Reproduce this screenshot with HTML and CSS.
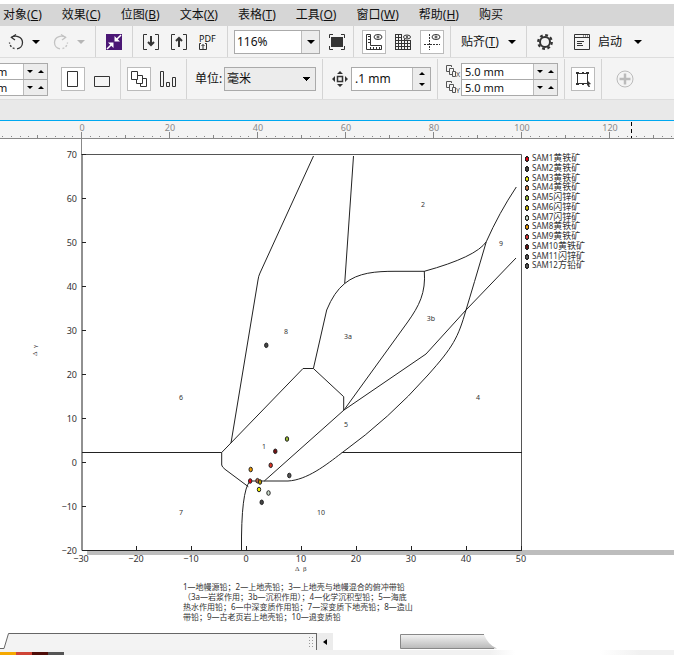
FILE: index.html
```html
<!DOCTYPE html>
<html lang="zh-CN">
<head>
<meta charset="utf-8">
<title>绘图</title>
<link rel="stylesheet" href="styles.css">
</head>
<body>
<svg class="defs" aria-hidden="true">
  <symbol id="down" viewBox="0 0 8 4"><path d="M0 0h8L4 4z"/></symbol>
  <symbol id="up" viewBox="0 0 8 4"><path d="M0 4h8L4 0z"/></symbol>
  <symbol id="copies" viewBox="0 0 10 12"><path d="M3.500 6.500H.5V.5H5.500V2M6.500 9.500H3.500V3.500H7.500V6M6.500 6.500h3v5h-3z" fill="none" stroke="#555"/></symbol>
</svg>
<nav class="menu">
  <a href="#">对象(<u>C</u>)</a><a href="#">效果(<u>C</u>)</a><a href="#">位图(<u>B</u>)</a><a href="#">文本(<u>X</u>)</a><a href="#">表格(<u>T</u>)</a><a href="#">工具(<u>O</u>)</a><a href="#">窗口(<u>W</u>)</a><a href="#">帮助(<u>H</u>)</a><a href="#">购买</a>
</nav>

<div class="bar standard">
  <div class="group history">
    <button class="split" aria-label="撤销"><svg width="16" height="16" viewBox="0 0 16 16" fill="none" stroke="#333" stroke-width="1.300"><path d="M3 3.500C8 .5 14.500 3 14.500 8.500C14.500 12 12 14.500 9 14.800"/><path d="M8 .5L3.500 3.500L7 6"/><path d="M6.500 14.500A6.500 6.500 0 0 1 1.500 8.500" stroke-dasharray="2 1.500"/></svg><svg class="arrow"><use href="#down"/></svg></button>
    <button class="split faded" aria-label="重做"><svg width="16" height="16" viewBox="0 0 16 16" fill="none" stroke="#333" stroke-width="1.300"><path d="M13 3.500C8 .5 1.500 3 1.500 8.500C1.500 12 4 14.500 7 14.800"/><path d="M8 .5L12.500 3.500L9 6"/><path d="M9.500 14.500A6.500 6.500 0 0 0 14.500 8.500" stroke-dasharray="2 1.500"/></svg><svg class="arrow"><use href="#down"/></svg></button>
  </div>
  <div class="group">
    <button aria-label="搜索内容"><svg width="16" height="16" viewBox="0 0 16 16"><path fill="#4b1775" d="M0 0h16v16H0z"/><path d="M15 1l-5 5M1 15l5-5" stroke="#fff" stroke-width="1.500"/><path d="M8.500 2v5.500H14zM2 8.500h5.500V14z" fill="#fff"/></svg></button>
  </div>
  <div class="group files">
    <button aria-label="导入"><svg width="16" height="16" viewBox="0 0 16 16" fill="none" stroke="#333"><path d="M4 .5H.5v15H4M12 .5h3.500v15H12"/><path d="M8 2v9M5 8l3 3 3-3" stroke-width="2"/></svg></button>
    <button aria-label="导出"><svg width="16" height="16" viewBox="0 0 16 16" fill="none" stroke="#333"><path d="M4 .5H.5v15H4M12 .5h3.500v15H12"/><path d="M8 13V4M5 7l3-3 3 3" stroke-width="2"/></svg></button>
    <button class="pdf" aria-label="发布为 PDF"><span>PDF</span><svg width="8" height="7" viewBox="0 0 8 7" fill="none" stroke="#333"><path d="M2 .5H.5v6h7v-6H6M4 6V1.500M2.500 3L4 1.500 5.500 3"/></svg></button>
  </div>
  <div class="group zoomer">
    <div class="combo"><input aria-label="缩放级别" value="116%"><button aria-label="缩放列表"><svg class="arrow"><use href="#down"/></svg></button></div>
    <button aria-label="全屏预览"><svg width="18" height="16" viewBox="0 0 18 16"><path d="M3 3h12v10H3z" fill="#333"/><path d="M1.500 4V.5H5M13 .5h3.500V4M1.500 12v3.500H5M13 15.500h3.500V12" fill="none" stroke="#333"/></svg></button>
  </div>
  <div class="group toggles">
    <button class="on" aria-label="显示标尺"><svg width="18" height="18" viewBox="0 0 18 18" fill="none" stroke="#333"><path d="M1.500 1.500h4v11h11v4h-15zM3 3.500h2M3 6.500h2M3 9.500h2M5.500 14v2M8.500 14v2M11.500 14v2M14.500 14v2"/><ellipse cx="13" cy="4" rx="4" ry="2.500"/><circle cx="13" cy="4" r="1"/></svg></button>
    <button aria-label="显示网格"><svg width="16" height="16" viewBox="0 0 16 16" fill="none" stroke="#333"><path d="M.5 0v16M3.500 0v16M6.500 0v16M9.500 5v11M12.500 6v10M15.500 6v10M0 .5h7M0 3.500h7M0 6.500h16M0 9.500h16M0 12.500h16M0 15.500h16"/><ellipse cx="12" cy="3" rx="3.500" ry="2"/><circle cx="12" cy="3" r=".7"/></svg></button>
    <button class="on" aria-label="显示辅助线"><svg width="18" height="18" viewBox="0 0 18 18" fill="none" stroke="#333"><path d="M6.500 1v16M1 11.500h16" stroke-dasharray="2 1"/><ellipse cx="13" cy="4" rx="4" ry="2.500"/><circle cx="13" cy="4" r="1"/></svg></button>
  </div>
  <div class="group">
    <button class="snap"><span>贴齐(<u>T</u>)</span><svg class="arrow"><use href="#down"/></svg></button>
  </div>
  <div class="group">
    <button aria-label="选项"><svg width="16" height="16" viewBox="0 0 16 16" fill="none" stroke="#333"><circle cx="8" cy="8" r="5" stroke-width="2"/><circle cx="8" cy="8" r="6.800" stroke-width="2.200" stroke-dasharray="2.800 2.540"/></svg></button>
  </div>
  <div class="group last">
    <button class="launch"><svg width="16" height="16" viewBox="0 0 16 16" fill="none" stroke="#333"><path d="M.5 .5h15v15H.5zM0 3.500h16"/><path d="M9 2h1M11 2h1M13 2h1M3 7.500h7M3 9.500h5M3 11.500h6"/></svg><span>启动</span><svg class="arrow"><use href="#down"/></svg></button>
  </div>
</div>

<div class="bar property">
  <div class="group page">
    <div class="spins narrow">
      <div><input aria-label="页面宽度" value="m"><button aria-label="减小"><svg><use href="#down"/></svg></button><button aria-label="增大"><svg><use href="#up"/></svg></button></div>
      <div><input aria-label="页面高度" value="m"><button aria-label="减小"><svg><use href="#down"/></svg></button><button aria-label="增大"><svg><use href="#up"/></svg></button></div>
    </div>
    <button class="on portrait" aria-label="纵向"><svg width="12" height="16" viewBox="0 0 12 16"><path d="M.5 .5h10v15H.5z" fill="none" stroke="#333"/></svg></button>
    <button aria-label="横向"><svg width="16" height="16" viewBox="0 0 16 16"><path d="M.5 5.500h15v10H.5z" fill="none" stroke="#333"/></svg></button>
  </div>
  <div class="group layout">
    <button class="on" aria-label="所有页面"><svg width="16" height="16" viewBox="0 0 16 16" fill="#fff" stroke="#333"><path d="M9.500 7.500h6v8h-6z"/><path d="M5.500 4.500h6v8h-6z"/><path d="M.5 .5h6v8h-6z"/></svg></button>
    <button aria-label="当前页"><svg width="16" height="16" viewBox="0 0 16 16" fill="none" stroke="#333"><path d="M.5 .5h3v15h-3zM6.500 11.500h3v4h-3zM12.500 6.500h3v9h-3z"/></svg></button>
  </div>
  <div class="group units">
    <label for="unit">单位:</label><select id="unit"><option>毫米</option></select>
  </div>
  <div class="group nudge">
    <svg width="16" height="16" viewBox="0 0 16 16"><path d="M5.500 5.500h5v5h-5z" fill="none" stroke="#333" stroke-width="1.500"/><path d="M8 0l3 3H5zM8 16l3-3H5zM0 8l3-3v6zM16 8l-3-3v6z" fill="#333"/></svg>
    <div class="stepper"><input aria-label="微调距离" value=".1 mm"><div><button aria-label="增大"><svg><use href="#up"/></svg></button><button aria-label="减小"><svg><use href="#down"/></svg></button></div></div>
  </div>
  <div class="group duplicate">
    <div class="axes"><span><svg><use href="#copies"/></svg>X</span><span><svg><use href="#copies"/></svg>Y</span></div>
    <div class="spins">
      <div><input aria-label="再制距离 X" value="5.0 mm"><button aria-label="减小"><svg><use href="#down"/></svg></button><button aria-label="增大"><svg><use href="#up"/></svg></button></div>
      <div><input aria-label="再制距离 Y" value="5.0 mm"><button aria-label="减小"><svg><use href="#down"/></svg></button><button aria-label="增大"><svg><use href="#up"/></svg></button></div>
    </div>
  </div>
  <div class="group treat">
    <button class="on" aria-label="视为已填充"><svg width="18" height="18" viewBox="0 0 18 18"><path d="M3.500 3.500h10v10h-10z" fill="none" stroke="#333"/><path d="M2 2h3v2H2zM8 2h2v2H8zM12 2h3v2h-3zM2 13h3v2H2zM8 13h2v2H8zM13 10l4 4-2 .5 1 2.500h-1.500l-1-2L13 16z" fill="#333"/></svg></button>
  </div>
  <div class="group last add">
    <button aria-label="自定义"><svg width="18" height="18" viewBox="0 0 18 18" fill="none" stroke="#bbb"><circle cx="9" cy="9" r="8"/><path d="M9 3.500v11M3.500 9h11" stroke-width="2.500"/></svg></button>
  </div>
</div>
<div class="tabs"></div>

<svg class="ruler" aria-label="标尺">
  <defs><pattern id="ticks" x="81" y="1" width="88" height="16" patternUnits="userSpaceOnUse"><path d="M.5 10v6M9.500 14v1M18.500 14v1M27.500 14v1M35.500 14v1M44.500 13v3M53.500 14v1M62.500 14v1M71.500 14v1M79.500 14v1" stroke="#888"/></pattern></defs>
  <rect y="1" width="100%" height="16" fill="url(#ticks)"/>
  <g text-anchor="middle"><text x="82" y="10">0</text><text x="170" y="10">20</text><text x="258" y="10">40</text><text x="346" y="10">60</text><text x="434" y="10">80</text><text x="522" y="10">100</text><text x="610" y="10">120</text></g>
  <path d="M631.500 1v16" stroke="#000" stroke-dasharray="4 3"/>
</svg>

<main>
  <figure>
    <div class="sheet">
      <svg class="plot" width="524" height="436" viewBox="0 139 524 436">
        <path class="guide" d="M81.500 139v16"/>
        <path class="frame" d="M82 154.500H521.500V550"/>
        <path class="axis" d="M82 154V550.500H522"/>
        <path class="tick" d="M82 154.500h4M82 198.500h4M82 242.500h4M82 286.500h4M82 330.500h4M82 374.500h4M82 418.500h4M82 462.500h4M82 506.500h4M136.500 546v4M191.500 546v4M246.500 546v4M301.500 546v4M356.500 546v4M411.500 546v4M466.500 546v4M521.500 546v4"/>
        <g class="num" text-anchor="end"><text x="77" y="158">70</text><text x="77" y="202">60</text><text x="77" y="246">50</text><text x="77" y="290">40</text><text x="77" y="334">30</text><text x="77" y="378">20</text><text x="77" y="422">10</text><text x="77" y="466">0</text><text x="77" y="510">−10</text><text x="77" y="554">−20</text></g>
        <g class="num" text-anchor="middle"><text x="81" y="562">−30</text><text x="136" y="562">−20</text><text x="191" y="562">−10</text><text x="246" y="562">0</text><text x="301" y="562">10</text><text x="356" y="562">20</text><text x="411" y="562">30</text><text x="466" y="562">40</text><text x="521" y="562">50</text></g>
        <text class="name" x="295" y="571">Δ&#160;&#160;β</text>
        <text class="name" transform="translate(37 356) rotate(-90)">Δ&#160;&#160;γ</text>
        <g class="field">
          <path d="M313.500 156L260 273Q258.500 276 258 280L231 443"/>
          <path d="M353.500 156L344.700 283.500"/>
          <path d="M313.400 368.500L326.700 310Q334 292 344.700 283.500C358 272.500 376 271.300 395 271.300H424.300Q476 257 486.300 241.700Q499 213 516.300 187"/>
          <path d="M424.300 271C426 293 419 306 407.700 322L344 410"/>
          <path d="M221.700 452.500L303 368.500H313.400L343.700 396.700V410"/>
          <path d="M82 452.500H221.700V465Q222 467 225 469.300L248.300 486.700"/>
          <path d="M241.500 550Q241 491 250 481H288C307 480 326 465 341.700 453Q390 418 428 375C453 347 458 338 466 310Q473 287 486.300 241.700"/>
          <path d="M264.300 481L344 410L426 354L466 310L516 258"/>
          <path d="M341.700 452.500H522"/>
        </g>
        <g class="zone" text-anchor="middle"><text x="264" y="449">1</text><text x="423" y="207">2</text><text x="348" y="339">3a</text><text x="431" y="321">3b</text><text x="478" y="400">4</text><text x="346" y="427">5</text><text x="181" y="400">6</text><text x="181" y="515">7</text><text x="286" y="334">8</text><text x="501" y="246">9</text><text x="321" y="515">10</text></g>
        <g class="dots">
          <ellipse cx="266.300" cy="345.300" rx="1.700" ry="2.300" fill="#444"/><ellipse cx="287" cy="439" rx="1.700" ry="2.300" fill="#9b3"/><ellipse cx="275.300" cy="451.300" rx="1.700" ry="2.300" fill="#711"/><ellipse cx="270.700" cy="465.300" rx="1.700" ry="2.300" fill="#d32"/><ellipse cx="250.700" cy="469.500" rx="1.700" ry="2.300" fill="#e90"/><ellipse cx="289.300" cy="475.500" rx="1.700" ry="2.300" fill="#555"/><ellipse cx="250.200" cy="481" rx="1.700" ry="2.300" fill="#e01"/><ellipse cx="257.500" cy="480.700" rx="1.700" ry="2.300" fill="#b64"/><ellipse cx="260" cy="482" rx="1.700" ry="2.300" fill="#b90"/><ellipse cx="259" cy="489.500" rx="1.700" ry="2.300" fill="#ee0"/><ellipse cx="268.500" cy="493" rx="1.700" ry="2.300" fill="#cdc"/><ellipse cx="261.700" cy="502.300" rx="1.700" ry="2.300" fill="#444"/>
        </g>
      </svg>
      <ul class="legend">
        <li class="s1"><span>SAM1</span>黄铁矿</li><li class="s2"><span>SAM2</span>黄铁矿</li><li class="s3"><span>SAM3</span>黄铁矿</li><li class="s4"><span>SAM4</span>黄铁矿</li><li class="s5"><span>SAM5</span>闪锌矿</li><li class="s6"><span>SAM6</span>闪锌矿</li><li class="s7"><span>SAM7</span>闪锌矿</li><li class="s8"><span>SAM8</span>黄铁矿</li><li class="s9"><span>SAM9</span>黄铁矿</li><li class="s10"><span>SAM10</span>黄铁矿</li><li class="s11"><span>SAM11</span>闪锌矿</li><li class="s12"><span>SAM12</span>方铅矿</li>
      </ul>
    </div>
    <figcaption>1—地幔源铅；2—上地壳铅；3—上地壳与地幔混合的俯冲带铅<br>（3a—岩浆作用；3b—沉积作用）；4—化学沉积型铅；5—海底<br>热水作用铅；6—中深变质作用铅；7—深变质下地壳铅；8—造山<br>带铅；9—古老页岩上地壳铅；10—退变质铅</figcaption>
  </figure>
</main>

<footer>
  <div class="scroll">
    <svg class="edge" width="12" height="17" viewBox="0 0 12 17"><path d="M12 0H8.500L4 15.500H0V17H12z" fill="#f3f3f3"/><path d="M12 .5H8.500L4 15.500H0" fill="none" stroke="#666"/></svg>
    <div class="track"><span class="grip"></span></div>
    <button aria-label="向左滚动"><svg width="4" height="6" viewBox="0 0 4 6"><path d="M4 0v6L0 3z"/></svg></button>
    <svg class="thumb" width="100" height="17" viewBox="0 0 100 17"><defs><linearGradient id="metal" x2="0" y2="1"><stop offset="0" stop-color="#f3f3f3"/><stop offset="1" stop-color="#b9b9b9"/></linearGradient></defs><path d="M.5 1.500H84Q88 12 97 15.500H.5z" fill="url(#metal)"/><path d="M84 1.500H.5v14H94" fill="none" stroke="#888"/></svg>
  </div>
  <div class="status"><i class="c1"></i><i class="c2"></i><i class="c3"></i><i class="c4"></i></div>
</footer>
</body>
</html>
```
FILE: styles.css
```css
* { box-sizing: border-box; }
body {
  margin: 0;
  min-height: 100vh;
  padding-top: 4px;
  display: flex;
  flex-direction: column;
  overflow: hidden;
  background: #fff;
  color: #111;
  font: 12px/16px "Noto Sans", "Noto Sans CJK SC", sans-serif;
}
.defs { position: absolute; width: 0; height: 0; }
svg { display: block; flex: none; }
button, input, select { font: inherit; color: inherit; margin: 0; padding: 0; border: 0; background: none; border-radius: 0; }
button { display: flex; align-items: center; justify-content: center; flex: none; }
.arrow { width: 8px; height: 4px; }

.menu { display: flex; gap: 20px; height: 22px; padding-left: 3px; align-items: center; background: #d6d6d6; white-space: nowrap; }
.menu a { color: inherit; text-decoration: none; }

.bar { display: flex; background: #f4f4f4; border-bottom: 1px solid #ddd; white-space: nowrap; }
.standard { height: 32px; }
.property { height: 42px; }
.group { display: flex; align-items: center; padding: 0 10px; flex: none; border-right: 1px solid #d4d4d4; }
.last { border-right: 0; }
.on { width: 24px; height: 24px; background: #fff; border: 1px solid #bbb; }

.history { gap: 13px; padding-left: 8px; }
.split { gap: 8px; }
.faded { opacity: .25; }
.files { gap: 12px; }
.pdf { width: 18px; flex-direction: column; align-items: flex-start; font-size: 9px; line-height: 9px; }
.zoomer { gap: 8px; padding: 0 7px 0 6px; }
.combo { display: flex; width: 86px; height: 24px; border: 1px solid #aaa; background: #fff; }
.combo input { flex: 1; min-width: 0; padding-left: 2px; }
.combo button { width: 18px; background: #ececec; border-left: 1px solid #bbb; }
.toggles { gap: 9px; padding: 0 6px 0 8px; }
.snap { gap: 9px; }
.launch { gap: 8px; }
.launch .arrow { margin-left: 4px; }

.property { padding-top: 1px; }
.page { padding-left: 0; }
.page .portrait { margin: 0 9px 0 13px; }
.spins { width: 97px; border: 1px solid #aaa; background: #fff; font-size: 11px; line-height: 15px; }
.spins div { display: flex; height: 15px; }
.spins div + div { height: 16px; border-top: 1px solid #aaa; }
.spins input { flex: 1; min-width: 0; padding-left: 3px; }
.spins button { width: 12px; background: #ececec; }
.spins input + button { border-left: 1px solid #bbb; }
.spins svg, .stepper svg { width: 6px; height: 3px; }
.narrow { width: 48px; border-left: 0; }
.narrow input { padding-left: 0; text-indent: -3px; }
.layout { gap: 9px; padding-left: 6px; }
.units { padding: 0 6px 0 8px; }
.units label { width: 29px; }
.units select { width: 92px; height: 24px; padding: 0 2px; appearance: none; border: 1px solid #aaa; background: linear-gradient(to bottom right, #000 50%, transparent 50%) right 4px center / 4px 4px no-repeat, linear-gradient(to bottom left, #000 50%, transparent 50%) right 8px center / 4px 4px no-repeat, #ececec; }
.nudge { gap: 3px; padding: 0 6px 0 9px; }
.stepper { display: flex; width: 80px; height: 24px; border: 1px solid #aaa; background: #fff; }
.stepper input { flex: 1; min-width: 0; padding-left: 3px; }
.stepper div { width: 18px; border-left: 1px solid #bbb; background: #ececec; }
.stepper button { width: 100%; height: 11px; }
.duplicate { padding: 0 6px 0 8px; }
.axes { width: 15px; font-size: 7px; color: #444; }
.axes span { display: flex; height: 16px; align-items: flex-end; line-height: 8px; }
.axes svg { width: 10px; height: 12px; align-self: center; }
.treat { padding: 0 6px; }
.add { padding-left: 14px; }

.tabs { height: 21px; background: #e9e9e9; border-bottom: 1px solid #00a8f0; }
.ruler { width: 100%; height: 18px; background: #f4f4f4; border-bottom: 1px solid #888; fill: #888; font-size: 9px; }

main { flex: 1; }
figure { margin: 0; }
.sheet { display: flex; align-items: flex-start; background: linear-gradient(#bdbdbd, #bdbdbd) 87px 411px / 100% 5px no-repeat; }
.plot { overflow: visible; font-size: 9px; fill: #333; }
.plot path { fill: none; stroke: #222; }
.plot .guide { stroke: #888; }
.plot .frame { stroke: #555; }
.zone { font-size: 7px; }
.name { font: 7px "Liberation Serif", serif; }
.dots ellipse { stroke: #222; }
.legend { list-style: none; margin: 15px 0 0 1px; padding: 0; height: 117px; display: grid; grid-auto-rows: 1fr; font: 9px/8px "Liberation Sans", "Noto Sans CJK SC", sans-serif; color: #333; white-space: nowrap; }
.legend li { padding-left: 7px; background: radial-gradient(ellipse 2px 3px at 2px 5px, var(--c) 50%, #222 60%, #222 95%, transparent 100%); }
.legend span { font-family: "Noto Sans", sans-serif; font-size: 8px; }
.s1 { --c: #e01; } .s2 { --c: #444; } .s3 { --c: #ee0; } .s4 { --c: #c74; }
.s5 { --c: #9b3; } .s6 { --c: #cb0; } .s7 { --c: #cdc; } .s8 { --c: #e90; }
.s9 { --c: #d33; } .s10 { --c: #611; } .s11, .s12 { --c: #555; }
figcaption { margin: 7px 0 10px 183px; font-size: 8px; line-height: 10px; color: #333; white-space: nowrap; }

.scroll { display: flex; height: 17px; }
.track { width: 305px; border: solid #666; border-width: 1px 1px 0 0; background: #f3f3f3; display: flex; justify-content: flex-end; }
.grip { width: 7px; margin: 2px 1px; background: radial-gradient(circle, #999 30%, transparent 40%) 0 0 / 3px 3px; }
.scroll button { width: 16px; background: #ececec; }
.thumb { margin-left: 67px; }
.status { display: flex; height: 5px; padding-top: 2px; background: linear-gradient(to right, #f1f1f1 490px, #fff 515px, #fff 600px, #f1f1f1 640px); }
.status i { height: 3px; width: 16px; }
.c1 { background: #f5a800; } .c2 { background: #cf4436; } .c3 { background: #4e0d08; } .c4 { background: #555; }
```
